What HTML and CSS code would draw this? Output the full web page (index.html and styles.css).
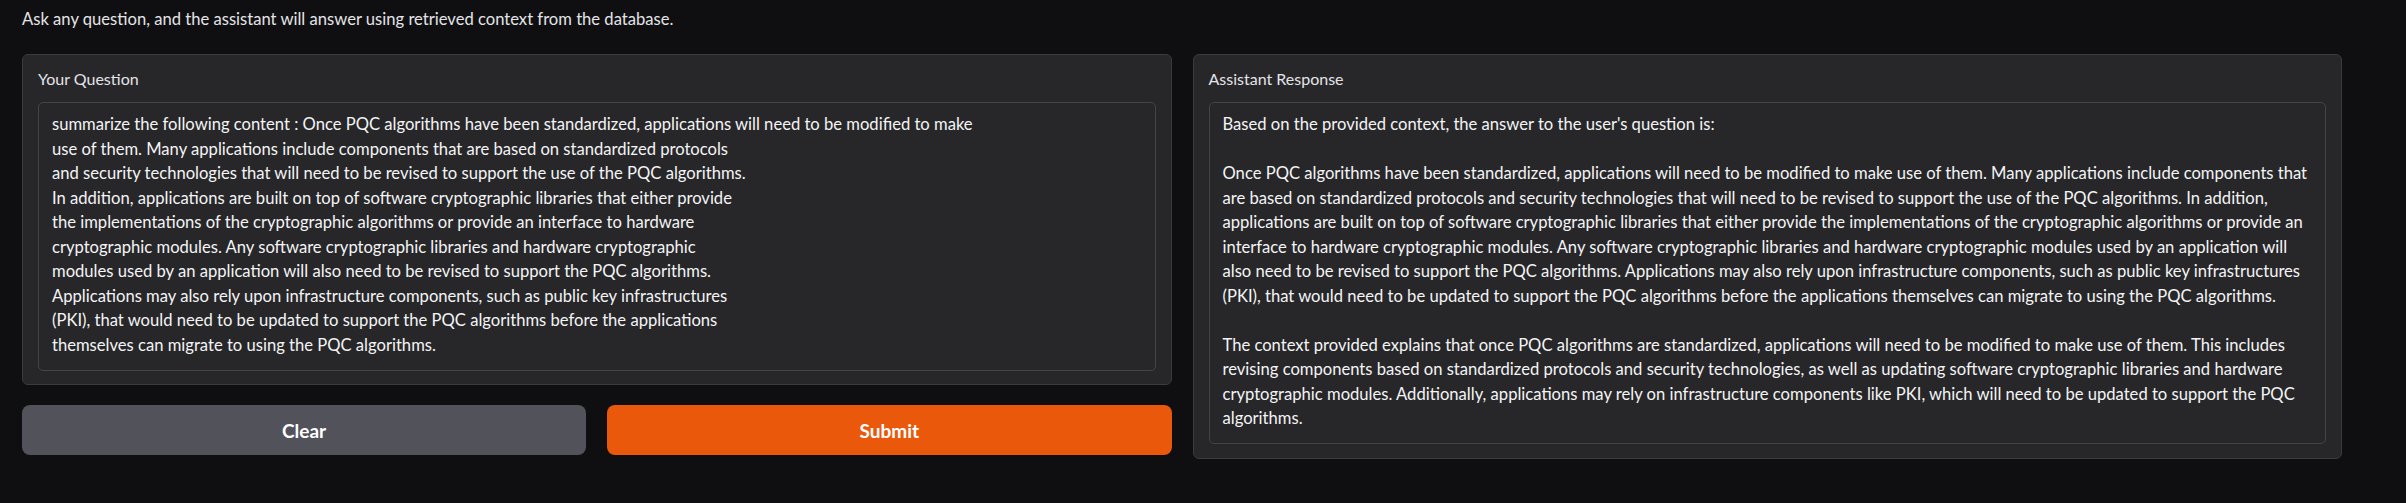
FILE: index.html
```html
<!DOCTYPE html>
<html lang="en">
<head>
<meta charset="utf-8">
<title>Assistant</title>
<link rel="stylesheet" href="styles.css">
</head>
<body>
<div class="page">
  <p class="intro">Ask any question, and the assistant will answer using retrieved context from the database.</p>
  <div class="row">
    <div class="col">
      <div class="panel">
        <div class="label">Your Question</div>
        <div class="box">summarize the following content : Once PQC algorithms have been standardized, applications will need to be modified to make
use of them. Many applications include components that are based on standardized protocols
and security technologies that will need to be revised to support the use of the PQC algorithms.
In addition, applications are built on top of software cryptographic libraries that either provide
the implementations of the cryptographic algorithms or provide an interface to hardware
cryptographic modules. Any software cryptographic libraries and hardware cryptographic
modules used by an application will also need to be revised to support the PQC algorithms.
Applications may also rely upon infrastructure components, such as public key infrastructures
(PKI), that would need to be updated to support the PQC algorithms before the applications
themselves can migrate to using the PQC algorithms.</div>
      </div>
      <div class="buttons">
        <button class="btn btn-secondary">Clear</button>
        <button class="btn btn-primary">Submit</button>
      </div>
    </div>
    <div class="col">
      <div class="panel">
        <div class="label">Assistant Response</div>
        <div class="box">Based on the provided context, the answer to the user's question is:

Once PQC algorithms have been standardized, applications will need to be modified to make use of them. Many applications include components that
are based on standardized protocols and security technologies that will need to be revised to support the use of the PQC algorithms. In addition,
applications are built on top of software cryptographic libraries that either provide the implementations of the cryptographic algorithms or provide an
interface to hardware cryptographic modules. Any software cryptographic libraries and hardware cryptographic modules used by an application will
also need to be revised to support the PQC algorithms. Applications may also rely upon infrastructure components, such as public key infrastructures
(PKI), that would need to be updated to support the PQC algorithms before the applications themselves can migrate to using the PQC algorithms.

The context provided explains that once PQC algorithms are standardized, applications will need to be modified to make use of them. This includes
revising components based on standardized protocols and security technologies, as well as updating software cryptographic libraries and hardware
cryptographic modules. Additionally, applications may rely on infrastructure components like PKI, which will need to be updated to support the PQC
algorithms.</div>
      </div>
    </div>
  </div>
</div>
</body>
</html>
```

FILE: styles.css
```css
html, body {
  margin: 0;
  padding: 0;
  background: #0f0f11;
}

body {
  font-family: "Lato", "Liberation Sans", sans-serif;
  font-size: 16.6px;
  color: #f4f4f5;
}

.page {
  width: 2320px;
  margin-left: 22px;
}

.intro {
  margin: 6.5px 0 0 0;
  line-height: 24.5px;
  color: #e4e4e7;
}

.row {
  margin-top: 23px;
  display: grid;
  grid-template-columns: 1fr 1fr;
  column-gap: 21px;
  align-items: start;
}

.col {
  display: flex;
  flex-direction: column;
  gap: 20px;
}

.panel {
  background: #27272a;
  border: 1px solid #3a3a3f;
  border-radius: 6px;
  padding: 13.5px 15px 13.5px 15px;
}

.label {
  font-size: 16px;
  line-height: 20px;
  color: #e4e4e7;
  margin-bottom: 13.5px;
}

.box {
  border: 1px solid #434348;
  border-radius: 5px;
  padding: 9px 13px 12.5px 13px;
  line-height: 24.5px;
  white-space: pre;
  overflow: hidden;
  color: #f4f4f5;
}

.buttons {
  display: grid;
  grid-template-columns: 1fr 1fr;
  column-gap: 21px;
}

.btn {
  height: 50px;
  border: none;
  border-radius: 8px;
  font-family: "Lato", "Liberation Sans", sans-serif;
  font-weight: 700;
  font-size: 19px;
  color: #ffffff;
}

.btn-secondary {
  background: #52525b;
}

.btn-primary {
  background: #ea580c;
}
```
